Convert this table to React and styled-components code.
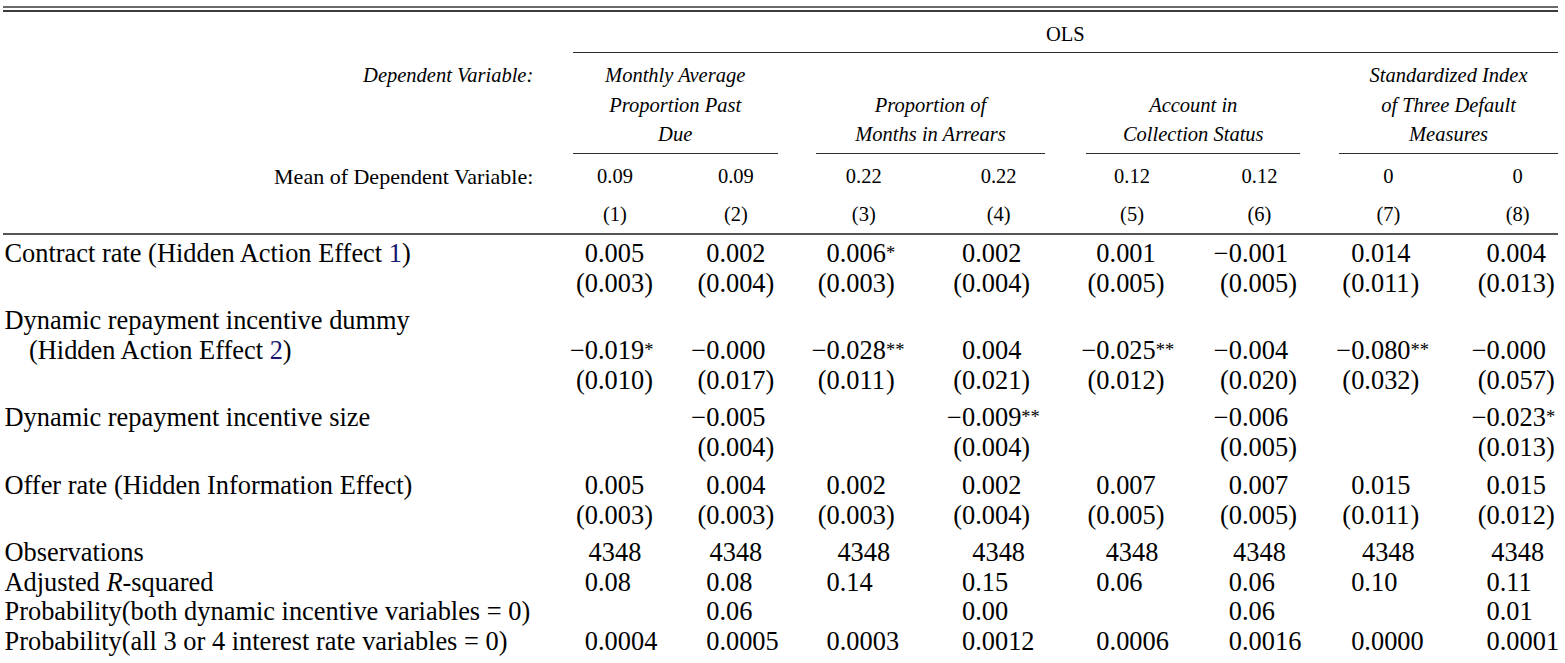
import React from 'react';
import styled, { createGlobalStyle } from 'styled-components';

const GlobalStyle = createGlobalStyle`
  html, body { margin: 0; padding: 0; background: #ffffff; }
  body {
    font-family: "Liberation Serif", "Times New Roman", serif;
    color: #000;
  }
`;

const COLS = '535.8px 90.4px 89.4px 104.4px 103.4px 101.4px 91.4px 104.4px 92.4px';
const SUFFIX = [16, 15, 30, 29, 27, 17, 30, 18];
const BLOCK_GAPS = [0, 7.5, 7, 8];

const Table = styled.div`
  width: 1555px;
  padding: 6px 0 0 3px;
`;

const DoubleRule = styled.div`
  height: 2px;
  border-top: 2px solid #6a6a6a;
  border-bottom: 2px solid #3c3c3c;
`;

const MidRule = styled.div`
  height: 2px;
  margin-top: 4px;
  background: #555;
`;

const Row = styled.div`
  display: grid;
  grid-template-columns: ${COLS};
  column-gap: 31px;
`;

const HeadRow = styled(Row)`
  font-size: 20.5px;
  line-height: 29.25px;
  padding-top: ${p => p.$pt || 0}px;
`;

const SpanHead = styled.div`
  grid-column: 2 / -1;
  text-align: center;
  margin: 0 6px 0 3px;
  padding-bottom: 3.25px;
  border-bottom: 1px solid #2e2e2e;
`;

const GroupHead = styled.div`
  grid-column: span 2;
  display: flex;
  flex-direction: column;
  justify-content: flex-end;
  align-items: center;
  font-style: italic;
  margin: 0 ${p => p.$r}px 0 ${p => p.$l}px;
  padding-bottom: 3.8px;
  border-bottom: 1px solid #2e2e2e;
  white-space: nowrap;
`;

const HeadLabel = styled.div`
  align-self: start;
  text-align: right;
  padding-right: 5.5px;
  white-space: nowrap;
  font-style: ${p => (p.$italic ? 'italic' : 'normal')};
  font-size: ${p => (p.$large ? '22px' : 'inherit')};
`;

const HeadValue = styled.div`
  text-align: center;
`;

const Body = styled.div`
  padding-top: 2.3px;
`;

const Block = styled.div`
  margin-top: ${p => p.$gap || 0}px;
`;

const BodyRow = styled(Row)`
  font-size: 26.4px;
  line-height: ${p => p.$lh || 30}px;
`;

const Label = styled.div`
  padding-left: ${p => (p.$indent ? 26 : 1.5)}px;
  white-space: nowrap;
`;

const Ref = styled.span`
  color: #16166e;
`;

const Em = styled.span`
  font-style: italic;
`;

const NumCell = styled.div`
  display: grid;
  grid-template-columns: 15px 59.4px ${p => p.$suffix}px;
  white-space: nowrap;
`;

const Pre = styled.span`
  justify-self: end;
`;

const Core = styled.span`
  justify-self: start;
`;

const Suf = styled.span`
  justify-self: start;
`;

const Star = styled.span`
  font-size: 0.7em;
  line-height: 1;
  vertical-align: 3px;
`;

const CountCell = styled.div`
  text-align: center;
`;

const Empty = styled.div``;

const groups = [
  { lines: ['Monthly Average', 'Proportion Past', 'Due'], l: 3, r: 3 },
  { lines: ['Proportion of', 'Months in Arrears'], l: 4, r: 5 },
  { lines: ['Account in', 'Collection Status'], l: 5, r: 5 },
  { lines: ['Standardized Index', 'of Three Default', 'Measures'], l: 3, r: 6 },
];

const means = ['0.09', '0.09', '0.22', '0.22', '0.12', '0.12', '0', '0'];

const blocks = [
  {
    label: (
      <>
        Contract rate (Hidden Action Effect <Ref>1</Ref>)
      </>
    ),
    coef: ['0.005', '0.002', '0.006*', '0.002', '0.001', '-0.001', '0.014', '0.004'],
    se: ['0.003', '0.004', '0.003', '0.004', '0.005', '0.005', '0.011', '0.013'],
  },
  {
    top: 'Dynamic repayment incentive dummy',
    indent: true,
    label: (
      <>
        (Hidden Action Effect <Ref>2</Ref>)
      </>
    ),
    coef: ['-0.019*', '-0.000', '-0.028**', '0.004', '-0.025**', '-0.004', '-0.080**', '-0.000'],
    se: ['0.010', '0.017', '0.011', '0.021', '0.012', '0.020', '0.032', '0.057'],
  },
  {
    label: 'Dynamic repayment incentive size',
    coef: [null, '-0.005', null, '-0.009**', null, '-0.006', null, '-0.023*'],
    se: [null, '0.004', null, '0.004', null, '0.005', null, '0.013'],
  },
  {
    label: 'Offer rate (Hidden Information Effect)',
    coef: ['0.005', '0.004', '0.002', '0.002', '0.007', '0.007', '0.015', '0.015'],
    se: ['0.003', '0.003', '0.003', '0.004', '0.005', '0.005', '0.011', '0.012'],
  },
];

const stats = [
  { label: 'Observations', values: Array(8).fill('4348'), centered: true },
  {
    label: (
      <>
        Adjusted <Em>R</Em>-squared
      </>
    ),
    values: ['0.08', '0.08', '0.14', '0.15', '0.06', '0.06', '0.10', '0.11'],
  },
  {
    label: 'Probability(both dynamic incentive variables = 0)',
    values: [null, '0.06', null, '0.00', null, '0.06', null, '0.01'],
  },
  {
    label: 'Probability(all 3 or 4 interest rate variables = 0)',
    values: ['0.0004', '0.0005', '0.0003', '0.0012', '0.0006', '0.0016', '0.0000', '0.0001'],
  },
];

function Coef({ value, col }) {
  if (value == null) return <Empty />;
  const neg = value.startsWith('-');
  const stars = (value.match(/\*/g) || []).length;
  const core = value.replace(/[-*]/g, '');
  return (
    <NumCell $suffix={SUFFIX[col]}>
      <Pre>{neg ? '\u2212' : ''}</Pre>
      <Core>{core}</Core>
      <Suf>{stars > 0 ? <Star>{'*'.repeat(stars)}</Star> : ''}</Suf>
    </NumCell>
  );
}

function SE({ value, col }) {
  if (value == null) return <Empty />;
  return (
    <NumCell $suffix={SUFFIX[col]}>
      <Pre>(</Pre>
      <Core>{value}</Core>
      <Suf>)</Suf>
    </NumCell>
  );
}

function Stat({ value, col, centered }) {
  if (value == null) return <Empty />;
  if (centered) return <CountCell>{value}</CountCell>;
  return (
    <NumCell $suffix={SUFFIX[col]}>
      <Pre />
      <Core>{value}</Core>
      <Suf />
    </NumCell>
  );
}

export default function App() {
  return (
    <>
      <GlobalStyle />
      <Table>
        <DoubleRule />
        <HeadRow $pt={7.5}>
          <div />
          <SpanHead>OLS</SpanHead>
        </HeadRow>
        <HeadRow $pt={8.45}>
          <HeadLabel $italic>Dependent Variable:</HeadLabel>
          {groups.map((g, i) => (
            <GroupHead key={i} $l={g.l} $r={g.r}>
              {g.lines.map(line => (
                <span key={line}>{line}</span>
              ))}
            </GroupHead>
          ))}
        </HeadRow>
        <HeadRow $pt={7.75}>
          <HeadLabel $large>Mean of Dependent Variable:</HeadLabel>
          {means.map((m, i) => (
            <HeadValue key={i}>{m}</HeadValue>
          ))}
        </HeadRow>
        <HeadRow $pt={9.15}>
          <div />
          {means.map((_, i) => (
            <HeadValue key={i}>({i + 1})</HeadValue>
          ))}
        </HeadRow>
        <MidRule />
        <Body>
          {blocks.map((b, bi) => (
            <Block key={bi} $gap={BLOCK_GAPS[bi]}>
              {b.top && (
                <BodyRow>
                  <Label>{b.top}</Label>
                </BodyRow>
              )}
              <BodyRow>
                <Label $indent={b.indent}>{b.label}</Label>
                {b.coef.map((v, i) => (
                  <Coef key={i} value={v} col={i} />
                ))}
              </BodyRow>
              <BodyRow>
                <Label />
                {b.se.map((v, i) => (
                  <SE key={i} value={v} col={i} />
                ))}
              </BodyRow>
            </Block>
          ))}
          <Block $gap={8.3}>
            {stats.map((s, si) => (
              <BodyRow key={si} $lh={29.4}>
                <Label>{s.label}</Label>
                {s.values.map((v, i) => (
                  <Stat key={i} value={v} col={i} centered={s.centered} />
                ))}
              </BodyRow>
            ))}
          </Block>
        </Body>
      </Table>
    </>
  );
}
